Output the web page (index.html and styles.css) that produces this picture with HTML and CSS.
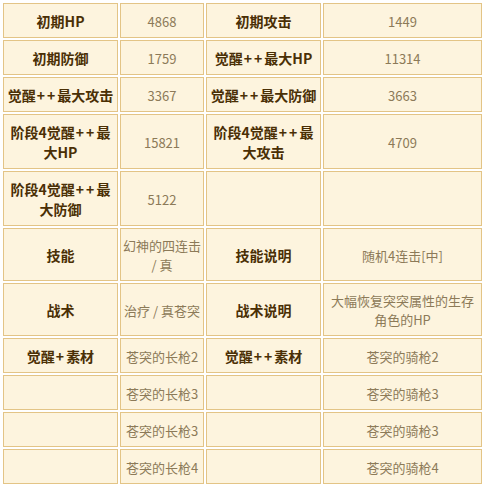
FILE: index.html
```html
<!DOCTYPE html>
<html lang="zh">
<head>
<meta charset="utf-8">
<link rel="stylesheet" href="styles.css">
</head>
<body>
<div class="stats">
  <div class="cell label"><span>初期HP</span></div><div class="cell value"><span>4868</span></div><div class="cell label"><span>初期攻击</span></div><div class="cell value"><span>1449</span></div>
  <div class="cell label"><span>初期防御</span></div><div class="cell value"><span>1759</span></div><div class="cell label"><span>觉醒<span class="plus">++</span>最大HP</span></div><div class="cell value"><span>11314</span></div>
  <div class="cell label"><span>觉醒<span class="plus">++</span>最大攻击</span></div><div class="cell value"><span>3367</span></div><div class="cell label"><span>觉醒<span class="plus">++</span>最大防御</span></div><div class="cell value"><span>3663</span></div>
  <div class="cell label"><span>阶段4觉醒<span class="plus">++</span>最<br>大HP</span></div><div class="cell value"><span>15821</span></div><div class="cell label"><span>阶段4觉醒<span class="plus">++</span>最<br>大攻击</span></div><div class="cell value"><span>4709</span></div>
  <div class="cell label"><span>阶段4觉醒<span class="plus">++</span>最<br>大防御</span></div><div class="cell value"><span>5122</span></div><div class="cell label"></div><div class="cell value"></div>
  <div class="cell label"><span>技能</span></div><div class="cell value"><span>幻神的四连击<br>/ 真</span></div><div class="cell label"><span>技能说明</span></div><div class="cell value"><span>随机4连击[中]</span></div>
  <div class="cell label"><span>战术</span></div><div class="cell value"><span>治疗 / 真苍突</span></div><div class="cell label"><span>战术说明</span></div><div class="cell value"><span>大幅恢复突突属性的生存<br>角色的HP</span></div>
  <div class="cell label"><span>觉醒<span class="plus">+</span>素材</span></div><div class="cell value"><span>苍突的长枪2</span></div><div class="cell label"><span>觉醒<span class="plus">++</span>素材</span></div><div class="cell value"><span>苍突的骑枪2</span></div>
  <div class="cell label"></div><div class="cell value"><span>苍突的长枪3</span></div><div class="cell label"></div><div class="cell value"><span>苍突的骑枪3</span></div>
  <div class="cell label"></div><div class="cell value"><span>苍突的长枪3</span></div><div class="cell label"></div><div class="cell value"><span>苍突的骑枪3</span></div>
  <div class="cell label"></div><div class="cell value"><span>苍突的长枪4</span></div><div class="cell label"></div><div class="cell value"><span>苍突的骑枪4</span></div>
</div>
</body>
</html>
```
FILE: styles.css
```css
html, body {
  margin: 0;
  padding: 0;
  background: #ffffff;
}
body {
  font-family: "Noto Sans CJK SC", "Noto Sans", sans-serif;
}
.stats {
  display: grid;
  grid-template-columns: 115px 84px 115px 159px;
  gap: 2px;
  padding: 3px 0 0 3px;
}
.cell {
  box-sizing: border-box;
  border: 1px solid #e3c486;
  background: #fdf4de;
  padding: 7px 2px 6px;
  display: flex;
  align-items: center;
  justify-content: center;
  text-align: center;
  min-height: 35px;
}
.label {
  font-size: 14px;
  line-height: 20px;
  font-weight: bold;
  color: #4a2f05;
}
.plus {
  letter-spacing: 2px;
  padding-left: 1px;
}
.value {
  font-size: 13px;
  line-height: 19px;
  color: #8c7a58;
}
```
